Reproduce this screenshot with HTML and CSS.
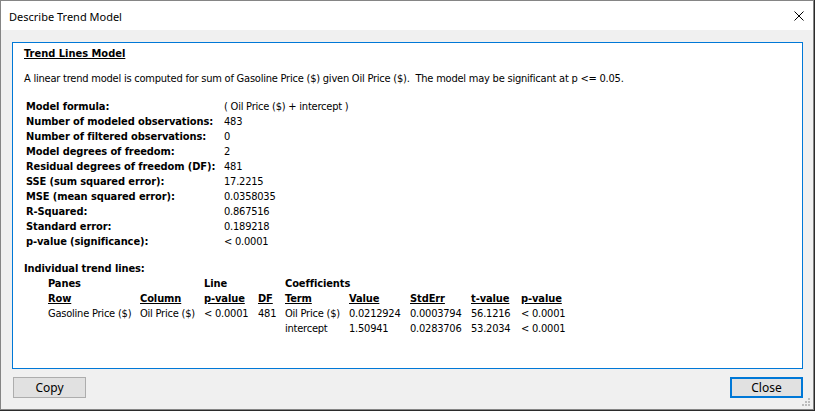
FILE: index.html
```
<!DOCTYPE html>
<html>
<head>
<meta charset="utf-8">
<link rel="stylesheet" href="styles.css">
</head>
<body>
<div class="window">
  <div class="titlebar">
    <span class="title">Describe Trend Model</span>
    <svg class="close-x" width="10" height="10" viewBox="0 0 10 10"><path d="M0.5 0.5 L9.5 9.5 M9.5 0.5 L0.5 9.5" stroke="#000" stroke-width="1" fill="none"/></svg>
  </div>
  <div class="client">
    <div class="panel">
      <div class="heading">Trend Lines Model</div>
      <div class="intro">A linear trend model is computed for sum of Gasoline Price ($) given Oil Price ($).&nbsp; The model may be significant at p &lt;= 0.05.</div>
      <div class="stats">
        <div class="lbl">Model formula:</div><div class="val">( Oil Price ($) + intercept )</div>
        <div class="lbl">Number of modeled observations:</div><div class="val">483</div>
        <div class="lbl">Number of filtered observations:</div><div class="val">0</div>
        <div class="lbl">Model degrees of freedom:</div><div class="val">2</div>
        <div class="lbl">Residual degrees of freedom (DF):</div><div class="val">481</div>
        <div class="lbl">SSE (sum squared error):</div><div class="val">17.2215</div>
        <div class="lbl">MSE (mean squared error):</div><div class="val">0.0358035</div>
        <div class="lbl">R-Squared:</div><div class="val">0.867516</div>
        <div class="lbl">Standard error:</div><div class="val">0.189218</div>
        <div class="lbl">p-value (significance):</div><div class="val">&lt; 0.0001</div>
      </div>
      <div class="sub">Individual trend lines:</div>
      <div class="tbl">
        <div class="b">Panes</div><div></div><div class="b">Line</div><div></div><div class="b">Coefficients</div><div></div><div></div><div></div><div></div>
        <div class="bu">Row</div><div class="bu">Column</div><div class="bu">p-value</div><div class="bu">DF</div><div class="bu">Term</div><div class="bu">Value</div><div class="bu">StdErr</div><div class="bu">t-value</div><div class="bu">p-value</div>
        <div>Gasoline Price ($)</div><div>Oil Price ($)</div><div>&lt; 0.0001</div><div>481</div><div>Oil Price ($)</div><div>0.0212924</div><div>0.0003794</div><div>56.1216</div><div>&lt; 0.0001</div>
        <div></div><div></div><div></div><div></div><div>intercept</div><div>1.50941</div><div>0.0283706</div><div>53.2034</div><div>&lt; 0.0001</div>
      </div>
    </div>
    <div class="buttons">
      <button class="btn">Copy</button>
      <button class="btn default">Close</button>
    </div>
  </div>
  <svg class="grip" width="9" height="9" viewBox="0 0 9 9">
    <rect x="6" y="0" width="2" height="2" fill="#bcbcbc"/>
    <rect x="3" y="3" width="2" height="2" fill="#bcbcbc"/>
    <rect x="6" y="3" width="2" height="2" fill="#bcbcbc"/>
    <rect x="0" y="6" width="2" height="2" fill="#bcbcbc"/>
    <rect x="3" y="6" width="2" height="2" fill="#bcbcbc"/>
    <rect x="6" y="6" width="2" height="2" fill="#bcbcbc"/>
  </svg>
</div>
</body>
</html>
```
FILE: styles.css
```
html, body {
  margin: 0;
  padding: 0;
  background: #2b2b2b;
}
body {
  width: 815px;
  height: 411px;
  overflow: hidden;
}
.window {
  position: relative;
  width: 814px;
  height: 410px;
  box-sizing: border-box;
  border: 1px solid #858585;
  background: #f0f0f0;
  display: flex;
  flex-direction: column;
}
.titlebar {
  height: 29px;
  background: #ffffff;
  display: flex;
  align-items: center;
  justify-content: space-between;
  padding: 0 9px 0 8px;
  flex: none;
}
.title {
  font-family: "Noto Sans", "Open Sans", sans-serif;
  font-size: 11px;
  color: #000;
  padding-top: 1px;
}
.close-x {
  display: block;
  margin-top: 1px;
}
.client {
  flex: 1;
  display: flex;
  flex-direction: column;
  padding: 12px 10px 0 11px;
}
.panel {
  height: 327px;
  box-sizing: border-box;
  border: 1px solid #0078d7;
  background: #ffffff;
  padding: 3px 11px 0 11px;
  font-family: "DejaVu Sans Condensed", "DejaVu Sans", sans-serif;
  font-size: 11px;
  line-height: 15px;
  color: #000;
  letter-spacing: -0.22px;
}
.heading {
  font-weight: bold;
  text-decoration: underline;
  letter-spacing: 0;
}
.intro {
  margin-top: 10px;
}
.stats {
  margin-top: 13px;
  margin-left: 2px;
  display: grid;
  grid-template-columns: 198px auto;
}
.lbl {
  font-weight: bold;
  letter-spacing: -0.1px;
}
.sub {
  margin-top: 12px;
  font-weight: bold;
  letter-spacing: -0.1px;
}
.tbl {
  margin-left: 24px;
  display: grid;
  grid-template-columns: 92px 64px 54px 27px 64px 61px 61px 50px auto;
  white-space: nowrap;
}
.b {
  font-weight: bold;
  letter-spacing: -0.1px;
}
.bu {
  font-weight: bold;
  text-decoration: underline;
  letter-spacing: -0.1px;
}
.buttons {
  margin-top: 8px;
  display: flex;
  justify-content: space-between;
  padding-left: 1px;
}
.btn {
  width: 73px;
  height: 21px;
  box-sizing: border-box;
  border: 1px solid #adadad;
  background: #e1e1e1;
  font-family: "Noto Sans", "Open Sans", sans-serif;
  font-size: 12px;
  color: #000;
  padding: 0;
  margin: 0;
}
.btn.default {
  border: 2px solid #0078d7;
}
.grip {
  position: absolute;
  right: 2px;
  bottom: 2px;
}
```
